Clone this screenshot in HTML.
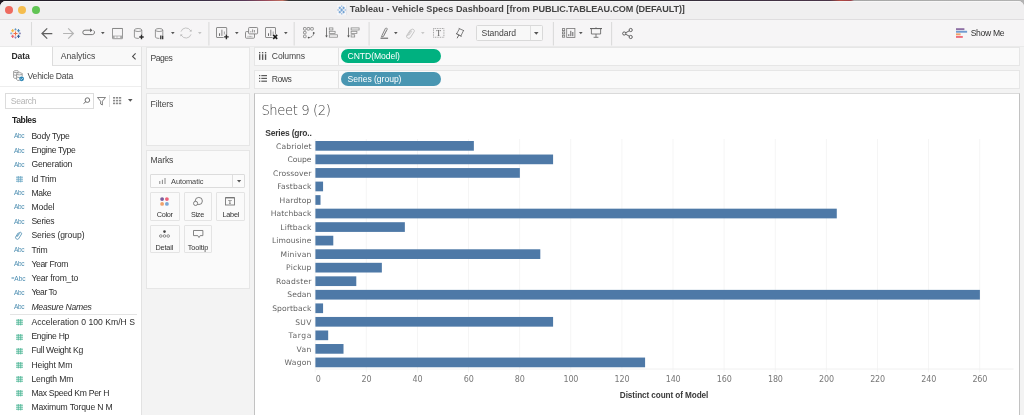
<!DOCTYPE html>
<html lang="en"><head><meta charset="utf-8"><title>Tableau - Vehicle Specs Dashboard</title>
<style>*{box-sizing:border-box;margin:0;padding:0}
html,body{width:1024px;height:415px;overflow:hidden}
body{background:#f3f3f3;font-family:"Liberation Sans",sans-serif;font-size:8.6px;color:#333;position:relative}
.abs{position:absolute}
#root{position:absolute;left:0;top:0;width:1024px;height:415px;will-change:transform}
.t{position:absolute;white-space:nowrap;line-height:1;transform:translateY(-50%)}
#topstrip{left:0;top:0;width:1024px;height:8px;background:linear-gradient(90deg,#1e1a24 0,#2a2230 10%,#3c3046 20%,#5a3a58 24%,#9a4a5a 26%,#c07060 27.6%,#343436 28.2%,#3a3a3c 50%,#2c2a30 60%,#3a3040 70%,#4a3448 81%,#b04a42 82%,#a04048 83.1%,#a6a6a6 83.4%,#b2b2b2 100%)}
#win{left:0;top:1px;width:1024px;height:414px;background:#f3f3f3;border-radius:6px 6px 0 0;overflow:hidden}
#titlebar{left:0;top:0;width:1024px;height:19px;background:#f0eff0;border-bottom:1px solid #dfdddf;box-shadow:inset 0 1px 0 #f7f6f7}
#toolbar{left:0;top:19px;width:1024px;height:27px;background:#f6f5f6;border-bottom:1px solid #eaeaea}
.tl{position:absolute;width:8.4px;height:8.4px;border-radius:50%}
.sep{position:absolute;width:1px;top:22px;height:23px;background:#dcdcdc}
#left{left:0;top:47px;width:141.5px;height:368px;background:#fff;border-right:1px solid #e2e2e2}
.card{position:absolute;background:#fafafa;border:1px solid #e6e6e6}
.pill{position:absolute;height:14px;border-radius:7px}
.btn{position:absolute;border:1px solid #e4e4e4;background:#fafafa;border-radius:1px}
.fld{color:#2c2c2c}
.abc{font-size:6.5px;color:#4a8cb0}
.bl{font-family:"DejaVu Sans","Liberation Sans",sans-serif;font-size:7.6px;color:#646464}
.bar{position:absolute;background:#4e79a7;height:9.8px}
.grid{position:absolute;width:1px;background:#f5f5f5}
.tick{font-family:"DejaVu Sans","Liberation Sans",sans-serif;font-size:8px;color:#787878}
svg{position:absolute;overflow:visible}
.sht{font-family:"DejaVu Sans Light","DejaVu Sans","Liberation Sans",sans-serif;font-weight:200;font-size:13.2px;color:#404040}
</style></head>
<body>
<div id="root">
<div class="abs" id="topstrip"></div>
<div class="abs" id="win"><div class="abs" id="titlebar"></div><div class="abs" id="toolbar"></div></div>
<div class="tl" style="left:4.7px;top:5.8px;background:#ee6a5f"></div>
<div class="tl" style="left:18.1px;top:5.8px;background:#f5bd4f"></div>
<div class="tl" style="left:31.7px;top:5.8px;background:#61c454"></div>
<svg style="left:336.8px;top:4.9px" width="9.6" height="10.2" viewBox="0 0 9.6 10.2"><rect x="0" y="0" width="9.6" height="10.2" rx="0.8" fill="#f5f5f8"/><path d="M9.5 0.4v9.6" stroke="#d8d8dc" stroke-width="0.5"/><g stroke="#6c9fd2" fill="none"><path d="M4.7 3.5v3M3.2 5h3" stroke-width="1.1"/><path d="M2.8 1.7v2.4M1.6 2.9h2.4M6.6 1.7v2.4M5.4 2.9h2.4M2.8 5.9v2.4M1.6 7.1h2.4M6.6 5.9v2.4M5.4 7.1h2.4" stroke-width="1"/><path d="M4.7 0.4v1.6M3.9 1.2h1.6M4.7 8v1.6M3.9 8.8h1.6M1.1 4.2v1.6M0.3 5h1.6M8.3 4.2v1.6M7.5 5h1.6" stroke-width="0.7" stroke="#8fb6de"/></g></svg>
<div class="t" style="top:10.3px;letter-spacing:0.049px;left:349.8px;font-weight:bold;font-size:9.1px;color:#444;">Tableau - Vehicle Specs Dashboard [from</div>
<div class="t" style="top:10.3px;letter-spacing:-0.124px;left:532.6px;font-weight:bold;font-size:9.1px;color:#444;">PUBLIC.TABLEAU.COM (DEFAULT)]</div>
<svg style="left:0px;top:20px" width="1024" height="26" viewBox="0 0 1024 26"><g stroke="#dbdbdb" stroke-width="1.1" fill="none"><path d="M31.5 2v23.5"/><path d="M208.9 2v23.5"/><path d="M294.2 2v23.5"/><path d="M369.1 2v23.5"/><path d="M553.4 2v23.5"/><path d="M611.6 2v23.5"/></g></svg>
<svg style="left:10px;top:27.5px" width="11" height="11" viewBox="0 0 11 11"><g fill="none">
<path d="M5.5 3.5v4M3.5 5.5h4" stroke="#ee7043" stroke-width="1.1"/>
<path d="M5.5 0.3v2.2M4.4 1.4h2.2" stroke="#5a8fbd" stroke-width="0.8"/>
<path d="M5.5 8.5v2.2M4.4 9.6h2.2" stroke="#8d7fb5" stroke-width="0.8"/>
<path d="M1.2 4.3v2.2M0.1 5.4h2.2" stroke="#7fb0d8" stroke-width="0.8"/>
<path d="M9.9 4.3v2.2M8.8 5.4h2.2" stroke="#7f7fb5" stroke-width="0.8"/>
<path d="M2.7 1.1v3.2M1.1 2.7h3.2" stroke="#f6b73c" stroke-width="1.1"/>
<path d="M8.5 1.1v3.2M6.9 2.7h3.2" stroke="#4f8fc0" stroke-width="1.1"/>
<path d="M2.7 6.7v3.2M1.1 8.3h3.2" stroke="#e85d68" stroke-width="1.1"/>
<path d="M8.5 6.7v3.2M6.9 8.3h3.2" stroke="#2f5f9a" stroke-width="1.1"/>
</g></svg>
<svg style="left:41px;top:27.7px" width="11.5" height="11" viewBox="0 0 11.5 11"><path d="M11.3 5.5H1M6.2 0.4L1 5.5L6.2 10.6" fill="none" stroke="#606060" stroke-width="1.25"/></svg>
<svg style="left:62.8px;top:27.7px" width="11.5" height="11" viewBox="0 0 11.5 11"><path d="M0.1 5.5H10.4M5.2 0.4L10.4 5.5L5.2 10.6" fill="none" stroke="#b4b4b4" stroke-width="1.2"/></svg>
<svg style="left:82px;top:27.4px" width="13" height="10" viewBox="0 0 13 10"><path d="M8.2 3.2H3A2.2 2.2 0 0 0 3 7.6H10.4A2.2 2.2 0 0 0 11.4 3.5" fill="none" stroke="#707070" stroke-width="0.95"/><path d="M8.1 1.2L10.4 3.2L8.1 5.2Z" fill="#555"/></svg>
<svg style="left:100.9px;top:32.2px" width="3.6" height="2.3" viewBox="0 0 3.6 2.3"><path d="M0 0H3.6L1.8 2.3Z" fill="#555"/></svg>
<svg style="left:111.6px;top:27.6px" width="11" height="11.2" viewBox="0 0 11 11.2"><rect x="0.5" y="0.5" width="10" height="10.2" rx="0.3" fill="none" stroke="#8c8c8c" stroke-width="0.9"/><path d="M0.3 0.5h10.4" stroke="#888" stroke-width="0.9"/><rect x="0.9" y="7.6" width="9.2" height="2.8" fill="#a8a8a8"/><rect x="2.6" y="8.4" width="2" height="1.6" fill="#f6f5f6"/><rect x="5.4" y="8.4" width="2.8" height="1.6" fill="#f6f5f6"/></svg>
<svg style="left:134px;top:27.6px" width="11" height="12" viewBox="0 0 11 12"><path d="M0.4 2v7a3.7 1.4 0 0 0 7.4 0v-7" fill="none" stroke="#858585" stroke-width="0.85"/><ellipse cx="4.1000000000000005" cy="2" rx="3.7" ry="1.5" fill="none" stroke="#858585" stroke-width="0.85"/><rect x="4.9" y="7" width="5.4" height="5" fill="#f6f5f6"/><path d="M7.5 6.8v4.4M5.3 9h4.4" stroke="#2a2a2a" stroke-width="1.35"/></svg>
<svg style="left:155px;top:27.6px" width="11" height="12" viewBox="0 0 11 12"><path d="M0.4 2v7a3.7 1.4 0 0 0 7.4 0v-7" fill="none" stroke="#858585" stroke-width="0.85"/><ellipse cx="4.1000000000000005" cy="2" rx="3.7" ry="1.5" fill="none" stroke="#858585" stroke-width="0.85"/><rect x="4.4" y="7" width="5" height="5" fill="#f6f5f6"/><path d="M5.8 7.4v3.8M7.7 7.4v3.8" stroke="#2a2a2a" stroke-width="1.25"/></svg>
<svg style="left:171.3px;top:32.2px" width="3.6" height="2.3" viewBox="0 0 3.6 2.3"><path d="M0 0H3.6L1.8 2.3Z" fill="#555"/></svg>
<svg style="left:180.2px;top:27.2px" width="12" height="12" viewBox="0 0 12 12"><path d="M1 4.6A5.2 5.2 0 0 1 10.6 3.8M11 7.4A5.2 5.2 0 0 1 1.4 8.2" fill="none" stroke="#bdbdbd" stroke-width="0.9"/><path d="M9.4 4.6h2.4l-0.5 -2.2Z M2.6 7.4H0.2l0.5 2.2Z" fill="#b0b0b0"/></svg>
<svg style="left:198.4px;top:32.2px" width="3.6" height="2.3" viewBox="0 0 3.6 2.3"><path d="M0 0H3.6L1.8 2.3Z" fill="#c2c2c2"/></svg>
<svg style="left:216px;top:27px" width="13" height="12.5" viewBox="0 0 13 12.5"><rect x="0.5" y="0.5" width="10.2" height="10" rx="0.5" fill="none" stroke="#808080" stroke-width="0.9"/><path d="M3.5599999999999996 8.9v-2.6" stroke="#555" stroke-width="0.9"/><path d="M5.906 8.9v-6.2" stroke="#777" stroke-width="0.9"/><path d="M8.354 8.9v-4.4" stroke="#999" stroke-width="0.9"/><rect x="7.6" y="7.4" width="5.6" height="5" fill="#f6f5f6"/><path d="M10.4 7.6v4.6M8.1 9.9h4.6" stroke="#2a2a2a" stroke-width="1.4"/></svg>
<svg style="left:235.0px;top:32.2px" width="3.6" height="2.3" viewBox="0 0 3.6 2.3"><path d="M0 0H3.6L1.8 2.3Z" fill="#555"/></svg>
<svg style="left:245px;top:27px" width="13" height="12" viewBox="0 0 13 12"><rect x="0.5" y="4.6" width="9" height="6.6" rx="0.8" fill="none" stroke="#808080" stroke-width="0.9"/><path d="M2.6 9.4h5" stroke="#999" stroke-width="1" stroke-dasharray="0.8 0.5"/><rect x="3.6" y="0.5" width="9" height="6.4" rx="0.8" fill="#f6f5f6" stroke="#808080" stroke-width="0.9"/><path d="M5.8 5.4v-1.3M7.6 5.4v-3M9.4 5.4v-2.4" stroke="#888" stroke-width="0.9"/></svg>
<svg style="left:265.1px;top:27px" width="13" height="12.5" viewBox="0 0 13 12.5"><rect x="0.5" y="0.5" width="10" height="10" rx="0.5" fill="none" stroke="#808080" stroke-width="0.9"/><path d="M3.5 8.9v-2.6" stroke="#555" stroke-width="0.9"/><path d="M5.800000000000001 8.9v-6.2" stroke="#777" stroke-width="0.9"/><path d="M8.2 8.9v-4.4" stroke="#999" stroke-width="0.9"/><rect x="7.6" y="7.4" width="5.6" height="5" fill="#f6f5f6"/><path d="M8.2 7.9l4 4M12.2 7.9l-4 4" stroke="#1a1a1a" stroke-width="1.5"/></svg>
<svg style="left:284.2px;top:32.2px" width="3.6" height="2.3" viewBox="0 0 3.6 2.3"><path d="M0 0H3.6L1.8 2.3Z" fill="#555"/></svg>
<svg style="left:303.3px;top:27px" width="12" height="12" viewBox="0 0 12 12"><g fill="none" stroke="#808080" stroke-width="0.8"><rect x="0.5" y="0.5" width="2.6" height="2.6" rx="0.5"/><rect x="4.1" y="0.5" width="2.6" height="2.6" rx="0.5"/><rect x="7.7" y="0.5" width="2.6" height="2.6" rx="0.5"/><rect x="0.5" y="4.4" width="2.6" height="2.4" rx="0.5"/><rect x="0.5" y="8.1" width="2.6" height="2.6" rx="0.5"/><path d="M10.6 6.6C10.4 8.8 8.6 10.4 6 10.6" stroke="#555" stroke-dasharray="1.2 0.5"/></g><circle cx="10.7" cy="6" r="0.9" fill="#555"/><circle cx="5.6" cy="10.6" r="0.9" fill="#555"/></svg>
<svg style="left:325px;top:27.4px" width="13" height="11" viewBox="0 0 13 11"><g fill="none" stroke="#858585" stroke-width="0.75"><path d="M1.5 0.5v9.6" stroke="#666" stroke-width="0.85"/><rect x="4.3" y="0.9" width="3.6" height="2.1"/><rect x="4.3" y="4.3" width="5.8" height="2.1"/><rect x="4.3" y="7.8" width="8.2" height="2.4"/></g><path d="M0.2 8.4h2.6l-1.3 2.2Z" fill="#555"/></svg>
<svg style="left:346.8px;top:27.4px" width="13" height="11" viewBox="0 0 13 11"><g fill="none" stroke="#858585" stroke-width="0.75"><path d="M1.5 0.5v9.6" stroke="#666" stroke-width="0.85"/><rect x="4.1" y="0.9" width="8" height="2.1"/><rect x="4.1" y="4.3" width="5.8" height="2.1"/><rect x="4.1" y="7.8" width="3.6" height="2.2"/></g><path d="M0.2 8.4h2.6l-1.3 2.2Z" fill="#555"/></svg>
<svg style="left:380px;top:27px" width="9" height="12" viewBox="0 0 9 12"><path d="M1.9 8.6L5.3 1.6A1 1 0 0 1 7.1 2.5L3.5 9.4L1.6 10Z" fill="none" stroke="#666" stroke-width="0.8"/><path d="M3.6 8.6L6.6 2.8" stroke="#888" stroke-width="0.5"/><path d="M0.5 11.2h7.6" stroke="#555" stroke-width="1"/></svg>
<svg style="left:394.4px;top:32.2px" width="3.6" height="2.3" viewBox="0 0 3.6 2.3"><path d="M0 0H3.6L1.8 2.3Z" fill="#555"/></svg>
<svg style="left:406px;top:27.6px" width="9" height="11" viewBox="0 0 9 11"><path d="M1.4 8L5.6 1.4A1.8 1.8 0 0 1 8.2 3.6L4.2 9.8A2.2 2.2 0 0 1 0.6 7.6L4.6 1.6" fill="none" stroke="#bcbcbc" stroke-width="0.85"/><path d="M3 7.4L6 3" stroke="#c8c8c8" stroke-width="0.8"/></svg>
<svg style="left:421.4px;top:32.2px" width="3.6" height="2.3" viewBox="0 0 3.6 2.3"><path d="M0 0H3.6L1.8 2.3Z" fill="#c8c8c8"/></svg>
<svg style="left:432.8px;top:28px" width="11.4" height="9.8" viewBox="0 0 11.4 9.8"><rect x="0.5" y="0.5" width="10.4" height="8.8" fill="none" stroke="#8a8a8a" stroke-width="0.8" stroke-dasharray="0.9 0.8"/><text x="5.7" y="7.7" font-family="Liberation Serif,serif" font-size="8" text-anchor="middle" fill="#555">T</text></svg>
<svg style="left:456px;top:27.8px" width="8.5" height="10.5" viewBox="0 0 8.5 10.5"><g fill="none" stroke="#5c5c5c" stroke-width="0.75" stroke-linecap="round"><path d="M3 0.5L7.7 2.6"/><path d="M3.3 1L0.7 5.7M7.4 2.8L4.9 7.9"/><path d="M0.4 5.7L5.2 8.2" stroke-width="1"/><path d="M2.7 7.2L1.3 9.9" stroke-width="0.9"/></g></svg>
<div class="abs" style="left:476px;top:25px;width:67px;height:16px;border:1px solid #d9d9d9;border-radius:1.5px;background:#f8f8f8"></div>
<div class="abs" style="left:530px;top:26px;width:1px;height:14px;background:#dfdfdf"></div>
<div class="t" style="top:33.2px;letter-spacing:-0.056px;left:481.6px;color:#444">Standard</div>
<svg style="left:534.0px;top:31.75px" width="4.6" height="2.7" viewBox="0 0 4.6 2.7"><path d="M0 0H4.6L2.3 2.7Z" fill="#555"/></svg>
<svg style="left:561.5px;top:28px" width="13.5" height="10" viewBox="0 0 13.5 10"><g fill="none" stroke="#777" stroke-width="0.8"><rect x="0.5" y="0.6" width="2.2" height="2" /><rect x="0.5" y="3.9" width="2.2" height="2"/><rect x="0.5" y="7.2" width="2.2" height="2"/><rect x="4.7" y="0.5" width="8.2" height="9"/></g><path d="M6.8 8.2v-2M8.8 8.2v-5.4M10.8 8.2v-4.2" stroke="#555" stroke-width="0.9"/></svg>
<svg style="left:578.6px;top:32.2px" width="3.6" height="2.3" viewBox="0 0 3.6 2.3"><path d="M0 0H3.6L1.8 2.3Z" fill="#555"/></svg>
<svg style="left:590px;top:27.4px" width="12" height="11" viewBox="0 0 12 11"><g fill="none" stroke="#666" stroke-width="0.85"><path d="M0 1.6h12" stroke="#555" stroke-width="1"/><path d="M6 0.4v1.2"/><path d="M1.4 1.8v5.2h9.2v-5.2"/><path d="M6 7v3.2M3.6 10.3h4.8"/></g></svg>
<svg style="left:621.6px;top:27.5px" width="11" height="11" viewBox="0 0 11 11"><g fill="#f6f5f6" stroke="#555" stroke-width="0.9"><path d="M2.4 5.5L8.4 2.2M2.4 5.5L8.4 8.8" fill="none"/><circle cx="2.2" cy="5.5" r="1.6"/><circle cx="8.7" cy="2" r="1.6"/><circle cx="8.7" cy="9" r="1.6"/></g></svg>
<svg style="left:955.8px;top:28px" width="11.5" height="10.5" viewBox="0 0 11.5 10.5"><rect x="0" y="0.2" width="8.4" height="1.9" fill="#8d6fa3"/><rect x="0" y="2.8" width="11.1" height="1.9" fill="#6f9bd0"/><rect x="0" y="5.4" width="4.6" height="1.9" fill="#f0a066"/><rect x="0" y="8" width="6.8" height="1.9" fill="#ee6e7c"/></svg>
<div class="t" style="top:33.2px;letter-spacing:-0.321px;left:970.7px;color:#333">Show Me</div>
<div class="abs" id="left"></div>
<div class="abs" style="left:52px;top:47px;width:89px;height:19px;background:#f9f9f9;border-left:1px solid #dcdcdc;border-bottom:1px solid #e0e0e0"></div>
<div class="t" style="top:55.9px;letter-spacing:-0.18px;left:11.6px;font-weight:bold;color:#2a2a2a">Data</div>
<div class="t" style="top:56.2px;letter-spacing:0.014px;left:60.8px;color:#444">Analytics</div>
<svg style="left:132.1px;top:52.7px" width="4" height="6.8" viewBox="0 0 4 6.8"><path d="M3.6 0.4L0.6 3.4L3.6 6.4" fill="none" stroke="#4a4a4a" stroke-width="1.1"/></svg>
<svg style="left:13px;top:70px" width="12" height="12" viewBox="0 0 12 12"><g fill="none" stroke="#777" stroke-width="0.7"><path d="M0.6 1.8v5.6a2.6 1 0 0 0 3 1"/><ellipse cx="3.2" cy="1.6" rx="2.6" ry="1"/><path d="M3.6 4v5.4a2.8 1.1 0 0 0 3 1.1"/><ellipse cx="6.4" cy="3.8" rx="2.8" ry="1.1"/><path d="M9.2 3.8v2.6M0.8 4.4a2.6 1 0 0 0 2.6 0.9M3.8 6.6a2.8 1 0 0 0 3 0.9"/></g><circle cx="8.6" cy="8.8" r="2.4" fill="#2a84b4"/><path d="M7.4 8.8l0.9 0.9l1.5-1.7" fill="none" stroke="#fff" stroke-width="0.7"/></svg>
<div class="t" style="top:75.7px;letter-spacing:-0.233px;left:27.6px;color:#444">Vehicle Data</div>
<div class="abs" style="left:0;top:85.5px;width:141px;height:1px;background:#eeeeee"></div>
<div class="abs" style="left:5px;top:93px;width:89px;height:16px;border:1px solid #dcdcdc;background:#fff"></div>
<div class="t" style="top:101.2px;letter-spacing:-0.307px;left:10.8px;color:#b4b4b4">Search</div>
<svg style="left:82.6px;top:97.3px" width="7" height="7" viewBox="0 0 7 7"><circle cx="4.4" cy="3.1" r="2.3" fill="none" stroke="#5a5a5a" stroke-width="0.85"/><path d="M2.8 4.8L0.5 6.6" stroke="#5a5a5a" stroke-width="0.9"/></svg>
<svg style="left:97px;top:97px" width="9" height="8.5" viewBox="0 0 9 8.5"><path d="M0.5 0.5H8.5L5.4 4.2V8L3.6 7V4.2Z" fill="none" stroke="#666" stroke-width="0.8"/></svg>
<div class="abs" style="left:109px;top:95px;width:1px;height:12px;background:#e0e0e0"></div>
<svg style="left:113px;top:97.3px" width="8.5" height="7.5" viewBox="0 0 8.5 7.5"><g fill="#8a8a8a"><rect x="0" y="0" width="2.2" height="1.6"/><rect x="3" y="0" width="2.2" height="1.6"/><rect x="6" y="0" width="2.2" height="1.6"/><rect x="0" y="2.8" width="2.2" height="1.6"/><rect x="3" y="2.8" width="2.2" height="1.6"/><rect x="6" y="2.8" width="2.2" height="1.6"/><rect x="0" y="5.6" width="2.2" height="1.6"/><rect x="3" y="5.6" width="2.2" height="1.6"/><rect x="6" y="5.6" width="2.2" height="1.6"/></g></svg>
<svg style="left:127.8px;top:99.15px" width="4.6" height="2.7" viewBox="0 0 4.6 2.7"><path d="M0 0H4.6L2.3 2.7Z" fill="#555"/></svg>
<div class="t" style="top:120.2px;letter-spacing:-0.419px;left:12px;font-weight:bold;color:#222">Tables</div>
<div class="t abc" style="top:136.3px;letter-spacing:-0.252px;left:13.9px;">Abc</div>
<div class="t fld" style="top:135.9px;letter-spacing:-0.257px;left:31.4px;">Body Type</div>
<div class="t abc" style="top:150.52px;letter-spacing:-0.252px;left:13.9px;">Abc</div>
<div class="t fld" style="top:150.12px;letter-spacing:-0.332px;left:31.4px;">Engine Type</div>
<div class="t abc" style="top:164.74px;letter-spacing:-0.252px;left:13.9px;">Abc</div>
<div class="t fld" style="top:164.34px;letter-spacing:-0.17px;left:31.4px;">Generation</div>
<svg style="left:15.5px;top:175.86px" width="7" height="6.4" viewBox="0 0 7 6.4"><path d="M0 1.2h7M0 3.2h7M0 5.2h7" stroke="#6aa6c4" stroke-width="0.95" fill="none"/><path d="M2.3 0v6.4M4.7 0v6.4" stroke="#6aa6c4" stroke-width="0.8" fill="none"/></svg>
<div class="t fld" style="top:178.56px;letter-spacing:-0.211px;left:31.4px;">Id Trim</div>
<div class="t abc" style="top:193.18px;letter-spacing:-0.252px;left:13.9px;">Abc</div>
<div class="t fld" style="top:192.78px;letter-spacing:-0.305px;left:31.4px;">Make</div>
<div class="t abc" style="top:207.4px;letter-spacing:-0.252px;left:13.9px;">Abc</div>
<div class="t fld" style="top:207.0px;letter-spacing:-0.077px;left:31.4px;">Model</div>
<div class="t abc" style="top:221.62000000000003px;letter-spacing:-0.252px;left:13.9px;">Abc</div>
<div class="t fld" style="top:221.22000000000003px;letter-spacing:-0.252px;left:31.4px;">Series</div>
<svg style="left:15.4px;top:231.14px" width="7.2" height="8.8" viewBox="0 0 7.2 8.8"><path d="M1.7 6L4.6 1.4A1.4 1.4 0 0 1 6.6 3L3.6 7.8A1.8 1.8 0 0 1 0.8 5.6L3.4 1.6" fill="none" stroke="#4a8cb0" stroke-width="0.8"/><path d="M2.6 5.6L5 2" stroke="#6aa6c4" stroke-width="0.6" fill="none"/></svg>
<div class="t fld" style="top:235.44px;letter-spacing:-0.104px;left:31.4px;">Series (group)</div>
<div class="t abc" style="top:250.06000000000003px;letter-spacing:-0.252px;left:13.9px;">Abc</div>
<div class="t fld" style="top:249.66000000000003px;letter-spacing:-0.158px;left:31.4px;">Trim</div>
<div class="t abc" style="top:264.28px;letter-spacing:-0.252px;left:13.9px;">Abc</div>
<div class="t fld" style="top:263.88px;letter-spacing:-0.352px;left:31.4px;">Year From</div>
<div class="t abc" style="top:278.5px;left:11.2px;"><span style="font-size:5.4px;position:relative;top:-0.6px">=</span>Abc</div>
<div class="t fld" style="top:278.1px;letter-spacing:-0.19px;left:31.4px;">Year from_to</div>
<div class="t abc" style="top:292.72px;letter-spacing:-0.252px;left:13.9px;">Abc</div>
<div class="t fld" style="top:292.32000000000005px;letter-spacing:-0.495px;left:31.4px;">Year To</div>
<div class="t abc" style="top:306.94px;letter-spacing:-0.252px;left:13.9px;">Abc</div>
<div class="t fld" style="top:306.54px;letter-spacing:-0.212px;left:31.4px;"><i>Measure Names</i></div>
<div class="abs" style="left:10px;top:314px;width:127px;height:1px;background:#e4e4e4"></div>
<svg style="left:15.5px;top:319.45px" width="7" height="6.4" viewBox="0 0 7 6.4"><path d="M0 1.2h7M0 3.2h7M0 5.2h7" stroke="#4db595" stroke-width="0.95" fill="none"/><path d="M2.3 0v6.4M4.7 0v6.4" stroke="#4db595" stroke-width="0.8" fill="none"/></svg>
<div class="t fld" style="top:322.15px;letter-spacing:0.013px;left:31.4px;">Acceleration 0 100 Km/H S</div>
<svg style="left:15.5px;top:333.62px" width="7" height="6.4" viewBox="0 0 7 6.4"><path d="M0 1.2h7M0 3.2h7M0 5.2h7" stroke="#4db595" stroke-width="0.95" fill="none"/><path d="M2.3 0v6.4M4.7 0v6.4" stroke="#4db595" stroke-width="0.8" fill="none"/></svg>
<div class="t fld" style="top:336.32px;letter-spacing:-0.268px;left:31.4px;">Engine Hp</div>
<svg style="left:15.5px;top:347.78999999999996px" width="7" height="6.4" viewBox="0 0 7 6.4"><path d="M0 1.2h7M0 3.2h7M0 5.2h7" stroke="#4db595" stroke-width="0.95" fill="none"/><path d="M2.3 0v6.4M4.7 0v6.4" stroke="#4db595" stroke-width="0.8" fill="none"/></svg>
<div class="t fld" style="top:350.48999999999995px;letter-spacing:-0.303px;left:31.4px;">Full Weight Kg</div>
<svg style="left:15.5px;top:361.96px" width="7" height="6.4" viewBox="0 0 7 6.4"><path d="M0 1.2h7M0 3.2h7M0 5.2h7" stroke="#4db595" stroke-width="0.95" fill="none"/><path d="M2.3 0v6.4M4.7 0v6.4" stroke="#4db595" stroke-width="0.8" fill="none"/></svg>
<div class="t fld" style="top:364.65999999999997px;letter-spacing:-0.081px;left:31.4px;">Height Mm</div>
<svg style="left:15.5px;top:376.13px" width="7" height="6.4" viewBox="0 0 7 6.4"><path d="M0 1.2h7M0 3.2h7M0 5.2h7" stroke="#4db595" stroke-width="0.95" fill="none"/><path d="M2.3 0v6.4M4.7 0v6.4" stroke="#4db595" stroke-width="0.8" fill="none"/></svg>
<div class="t fld" style="top:378.83px;letter-spacing:-0.112px;left:31.4px;">Length Mm</div>
<svg style="left:15.5px;top:390.3px" width="7" height="6.4" viewBox="0 0 7 6.4"><path d="M0 1.2h7M0 3.2h7M0 5.2h7" stroke="#4db595" stroke-width="0.95" fill="none"/><path d="M2.3 0v6.4M4.7 0v6.4" stroke="#4db595" stroke-width="0.8" fill="none"/></svg>
<div class="t fld" style="top:393.0px;letter-spacing:-0.295px;left:31.4px;">Max Speed Km Per H</div>
<svg style="left:15.5px;top:404.46999999999997px" width="7" height="6.4" viewBox="0 0 7 6.4"><path d="M0 1.2h7M0 3.2h7M0 5.2h7" stroke="#4db595" stroke-width="0.95" fill="none"/><path d="M2.3 0v6.4M4.7 0v6.4" stroke="#4db595" stroke-width="0.8" fill="none"/></svg>
<div class="t fld" style="top:407.16999999999996px;letter-spacing:-0.147px;left:31.4px;">Maximum Torque N M</div>
<div class="card" style="left:146px;top:47px;width:103.5px;height:41.5px"></div>
<div class="t" style="top:57.6px;letter-spacing:-0.544px;left:150.6px;color:#444">Pages</div>
<div class="card" style="left:146px;top:92.7px;width:103.5px;height:53px"></div>
<div class="t" style="top:103.8px;letter-spacing:-0.101px;left:150.6px;color:#444">Filters</div>
<div class="card" style="left:146px;top:149.6px;width:103.5px;height:139.8px"></div>
<div class="t" style="top:160.4px;letter-spacing:-0.152px;left:150.6px;color:#444">Marks</div>
<div class="abs" style="left:150.4px;top:174px;width:95px;height:14.4px;border:1px solid #dcdcdc;background:#fbfbfb;border-radius:1px"></div>
<div class="abs" style="left:232px;top:174.5px;width:1px;height:13.4px;background:#dedede"></div>
<svg style="left:159.2px;top:178px" width="7" height="6" viewBox="0 0 7 6"><path d="M0.8 6V3M3.4 6V1.8M6 6V0" stroke="#888" stroke-width="1" fill="none"/></svg>
<div class="t" style="top:181.5px;letter-spacing:-0.047px;left:171px;font-size:7.4px;color:#444">Automatic</div>
<svg style="left:236.5px;top:180.15px" width="4.2" height="2.5" viewBox="0 0 4.2 2.5"><path d="M0 0H4.2L2.1 2.5Z" fill="#555"/></svg>
<div class="btn" style="left:150.4px;top:192.3px;width:29.2px;height:28.4px"></div>
<div class="t" style="top:215.0px;letter-spacing:-0.284px;left:164.758px;transform:translate(-50%,-50%);font-size:7.3px;color:#333">Color</div>
<div class="btn" style="left:184px;top:192.3px;width:28px;height:28.4px"></div>
<div class="t" style="top:215.0px;letter-spacing:-0.301px;left:197.45px;transform:translate(-50%,-50%);font-size:7.3px;color:#333">Size</div>
<div class="btn" style="left:216.2px;top:192.3px;width:29px;height:28.4px"></div>
<div class="t" style="top:215.0px;letter-spacing:-0.265px;left:230.767px;transform:translate(-50%,-50%);font-size:7.3px;color:#333">Label</div>
<div class="btn" style="left:150.4px;top:225px;width:29.2px;height:28.4px"></div>
<div class="t" style="top:247.7px;letter-spacing:-0.191px;left:164.305px;transform:translate(-50%,-50%);font-size:7.3px;color:#333">Detail</div>
<div class="btn" style="left:184px;top:225px;width:28px;height:28.4px"></div>
<div class="t" style="top:247.7px;letter-spacing:-0.099px;left:197.951px;transform:translate(-50%,-50%);font-size:7.3px;color:#333">Tooltip</div>
<svg style="left:160.2px;top:197.2px" width="9" height="9" viewBox="0 0 9 9"><circle cx="2.1" cy="2.1" r="1.9" fill="#7b5c9a"/><circle cx="6.9" cy="2.1" r="1.9" fill="#ee6279"/><circle cx="2.1" cy="6.9" r="1.9" fill="#f0a16a"/><circle cx="6.9" cy="6.9" r="1.9" fill="#7da7d4"/></svg>
<svg style="left:193px;top:197px" width="10" height="9" viewBox="0 0 10 9"><circle cx="5.8" cy="4" r="3.6" fill="none" stroke="#666" stroke-width="0.8"/><circle cx="2.6" cy="6.4" r="2.1" fill="#fafafa" stroke="#666" stroke-width="0.8"/></svg>
<svg style="left:225.4px;top:197.4px" width="10" height="8.6" viewBox="0 0 10 8.6"><rect x="0.5" y="0.8" width="9" height="7.2" fill="none" stroke="#777" stroke-width="0.9"/><path d="M0.5 0.6h9" stroke="#777" stroke-width="1.2"/><text x="5" y="6.9" font-family="Liberation Serif,serif" font-size="6.4" text-anchor="middle" fill="#444">T</text></svg>
<svg style="left:159px;top:229.6px" width="11" height="8" viewBox="0 0 11 8"><circle cx="5.5" cy="1.6" r="1.3" fill="#444"/><g fill="none" stroke="#666" stroke-width="0.7"><circle cx="1.8" cy="6" r="1.3"/><circle cx="5.5" cy="6" r="1.3"/><circle cx="9.2" cy="6" r="1.3"/></g></svg>
<svg style="left:193px;top:230px" width="10.4" height="8.4" viewBox="0 0 10.4 8.4"><path d="M0.5 0.5H9.9V5.6H7.2L6 7.6L4.8 5.6H0.5Z" fill="none" stroke="#666" stroke-width="0.8" stroke-linejoin="round"/></svg>
<div class="card" style="left:254.3px;top:47px;width:765.4px;height:18.6px"></div>
<div class="card" style="left:254.3px;top:70px;width:765.4px;height:19px"></div>
<div class="abs" style="left:337.8px;top:47.5px;width:1px;height:17.6px;background:#e2e2e2"></div>
<div class="abs" style="left:337.8px;top:70.5px;width:1px;height:18px;background:#e2e2e2"></div>
<svg style="left:259.3px;top:51.7px" width="7.4" height="8" viewBox="0 0 7.4 8"><g fill="#5a5a5a"><rect x="0" y="0" width="1.35" height="1.3"/><rect x="2.95" y="0" width="1.35" height="1.3"/><rect x="5.9" y="0" width="1.35" height="1.3"/><rect x="0" y="2.2" width="1.35" height="5.7"/><rect x="2.95" y="2.2" width="1.35" height="5.7"/><rect x="5.9" y="2.2" width="1.35" height="5.7"/></g></svg>
<div class="t" style="top:56.1px;letter-spacing:-0.12px;left:271.8px;color:#444">Columns</div>
<svg style="left:259px;top:75.1px" width="8" height="7" viewBox="0 0 8 7"><g fill="#5a5a5a"><rect x="0" y="0" width="1.3" height="1.2"/><rect x="0" y="2.8" width="1.3" height="1.2"/><rect x="0" y="5.6" width="1.3" height="1.2"/><rect x="2.3" y="0" width="5.7" height="1.2"/><rect x="2.3" y="2.8" width="5.7" height="1.2"/><rect x="2.3" y="5.6" width="5.7" height="1.2"/></g></svg>
<div class="t" style="top:79.1px;letter-spacing:-0.533px;left:271.8px;color:#444">Rows</div>
<div class="pill" style="left:340.6px;top:49px;width:100.6px;background:#00b180"></div>
<div class="t" style="top:56.2px;letter-spacing:-0.07px;left:347.6px;color:#fff">CNTD(Model)</div>
<div class="pill" style="left:340.6px;top:72px;width:100.6px;background:#4996b2"></div>
<div class="t" style="top:79.2px;letter-spacing:-0.043px;left:347.6px;color:#fff">Series (group)</div>
<div class="abs" style="left:254px;top:93px;width:766px;height:330px;background:#fff;border:1px solid #c2c2c2;border-top-color:#dadada"></div>
<div class="t sht" style="top:111.4px;letter-spacing:-0.409px;left:261.4px;">Sheet 9 (2)</div>
<div class="t" style="top:133.1px;letter-spacing:-0.22px;left:265.3px;font-size:8.5px;font-weight:bold;color:#3a3a3a">Series (gro..</div>
<svg style="left:0px;top:0px" width="1024" height="415" viewBox="0 0 1024 415"><path d="M315.20 139V372.4" stroke="#f5f5f5" stroke-width="1"/><path d="M366.32 139V372.4" stroke="#f5f5f5" stroke-width="1"/><path d="M417.43 139V372.4" stroke="#f5f5f5" stroke-width="1"/><path d="M468.55 139V372.4" stroke="#f5f5f5" stroke-width="1"/><path d="M519.66 139V372.4" stroke="#f5f5f5" stroke-width="1"/><path d="M570.78 139V372.4" stroke="#f5f5f5" stroke-width="1"/><path d="M621.89 139V372.4" stroke="#f5f5f5" stroke-width="1"/><path d="M673.01 139V372.4" stroke="#f5f5f5" stroke-width="1"/><path d="M724.12 139V372.4" stroke="#f5f5f5" stroke-width="1"/><path d="M775.24 139V372.4" stroke="#f5f5f5" stroke-width="1"/><path d="M826.35 139V372.4" stroke="#f5f5f5" stroke-width="1"/><path d="M877.47 139V372.4" stroke="#f5f5f5" stroke-width="1"/><path d="M928.58 139V372.4" stroke="#f5f5f5" stroke-width="1"/><path d="M979.70 139V372.4" stroke="#f5f5f5" stroke-width="1"/><path d="M315.4 369H1013.6" stroke="#f0f0f0" stroke-width="1"/><rect x="315.4" y="141.00" width="158.46" height="9.7" fill="#4e79a7"/><rect x="315.4" y="154.53" width="237.69" height="9.7" fill="#4e79a7"/><rect x="315.4" y="168.07" width="204.46" height="9.7" fill="#4e79a7"/><rect x="315.4" y="181.60" width="7.67" height="9.7" fill="#4e79a7"/><rect x="315.4" y="195.14" width="5.11" height="9.7" fill="#4e79a7"/><rect x="315.4" y="208.67" width="521.38" height="9.7" fill="#4e79a7"/><rect x="315.4" y="222.21" width="89.45" height="9.7" fill="#4e79a7"/><rect x="315.4" y="235.75" width="17.89" height="9.7" fill="#4e79a7"/><rect x="315.4" y="249.28" width="224.91" height="9.7" fill="#4e79a7"/><rect x="315.4" y="262.81" width="66.45" height="9.7" fill="#4e79a7"/><rect x="315.4" y="276.35" width="40.89" height="9.7" fill="#4e79a7"/><rect x="315.4" y="289.88" width="664.50" height="9.7" fill="#4e79a7"/><rect x="315.4" y="303.42" width="7.67" height="9.7" fill="#4e79a7"/><rect x="315.4" y="316.95" width="237.69" height="9.7" fill="#4e79a7"/><rect x="315.4" y="330.49" width="12.78" height="9.7" fill="#4e79a7"/><rect x="315.4" y="344.02" width="28.11" height="9.7" fill="#4e79a7"/><rect x="315.4" y="357.56" width="329.69" height="9.7" fill="#4e79a7"/></svg>
<div class="t bl" style="top:146.54999999999998px;letter-spacing:0.11px;right:712.49px;">Cabriolet</div>
<div class="t bl" style="top:160.08499999999998px;letter-spacing:-0.116px;right:712.716px;">Coupe</div>
<div class="t bl" style="top:173.61999999999998px;letter-spacing:0.081px;right:712.519px;">Crossover</div>
<div class="t bl" style="top:187.15499999999997px;letter-spacing:0.127px;right:712.473px;">Fastback</div>
<div class="t bl" style="top:200.69px;letter-spacing:0.212px;right:712.388px;">Hardtop</div>
<div class="t bl" style="top:214.22499999999997px;letter-spacing:0.039px;right:712.561px;">Hatchback</div>
<div class="t bl" style="top:227.76px;letter-spacing:0.171px;right:712.429px;">Liftback</div>
<div class="t bl" style="top:241.295px;letter-spacing:0.094px;right:712.506px;">Limousine</div>
<div class="t bl" style="top:254.82999999999998px;letter-spacing:0.226px;right:712.374px;">Minivan</div>
<div class="t bl" style="top:268.36499999999995px;letter-spacing:0.16px;right:712.44px;">Pickup</div>
<div class="t bl" style="top:281.9px;letter-spacing:0.215px;right:712.385px;">Roadster</div>
<div class="t bl" style="top:295.435px;letter-spacing:0.08px;right:712.52px;">Sedan</div>
<div class="t bl" style="top:308.96999999999997px;letter-spacing:0.095px;right:712.505px;">Sportback</div>
<div class="t bl" style="top:322.505px;letter-spacing:0.311px;right:712.289px;">SUV</div>
<div class="t bl" style="top:336.04px;letter-spacing:0.6px;right:712.0px;">Targa</div>
<div class="t bl" style="top:349.575px;letter-spacing:0.411px;right:712.189px;">Van</div>
<div class="t bl" style="top:363.10999999999996px;letter-spacing:0.233px;right:712.367px;">Wagon</div>
<div class="t tick" style="top:380.1px;left:318.3px;transform:translate(-50%,-50%);">0</div>
<div class="t tick" style="top:380.1px;letter-spacing:-0.088px;left:366.476px;transform:translate(-50%,-50%);">20</div>
<div class="t tick" style="top:380.1px;letter-spacing:-0.088px;left:417.586px;transform:translate(-50%,-50%);">40</div>
<div class="t tick" style="top:380.1px;letter-spacing:-0.088px;left:468.706px;transform:translate(-50%,-50%);">60</div>
<div class="t tick" style="top:380.1px;letter-spacing:-0.088px;left:519.816px;transform:translate(-50%,-50%);">80</div>
<div class="t tick" style="top:380.1px;letter-spacing:-0.141px;left:570.909px;transform:translate(-50%,-50%);">100</div>
<div class="t tick" style="top:380.1px;letter-spacing:-0.141px;left:622.019px;transform:translate(-50%,-50%);">120</div>
<div class="t tick" style="top:380.1px;letter-spacing:-0.141px;left:673.139px;transform:translate(-50%,-50%);">140</div>
<div class="t tick" style="top:380.1px;letter-spacing:-0.141px;left:724.25px;transform:translate(-50%,-50%);">160</div>
<div class="t tick" style="top:380.1px;letter-spacing:-0.141px;left:775.37px;transform:translate(-50%,-50%);">180</div>
<div class="t tick" style="top:380.1px;letter-spacing:-0.141px;left:826.479px;transform:translate(-50%,-50%);">200</div>
<div class="t tick" style="top:380.1px;letter-spacing:-0.141px;left:877.599px;transform:translate(-50%,-50%);">220</div>
<div class="t tick" style="top:380.1px;letter-spacing:-0.141px;left:928.709px;transform:translate(-50%,-50%);">240</div>
<div class="t tick" style="top:380.1px;letter-spacing:-0.141px;left:979.829px;transform:translate(-50%,-50%);">260</div>
<div class="t" style="top:396.1px;letter-spacing:-0.092px;left:664.054px;transform:translate(-50%,-50%);font-size:8.2px;font-weight:bold;color:#3a3a3a">Distinct count of Model</div>
</div>
</body></html>
